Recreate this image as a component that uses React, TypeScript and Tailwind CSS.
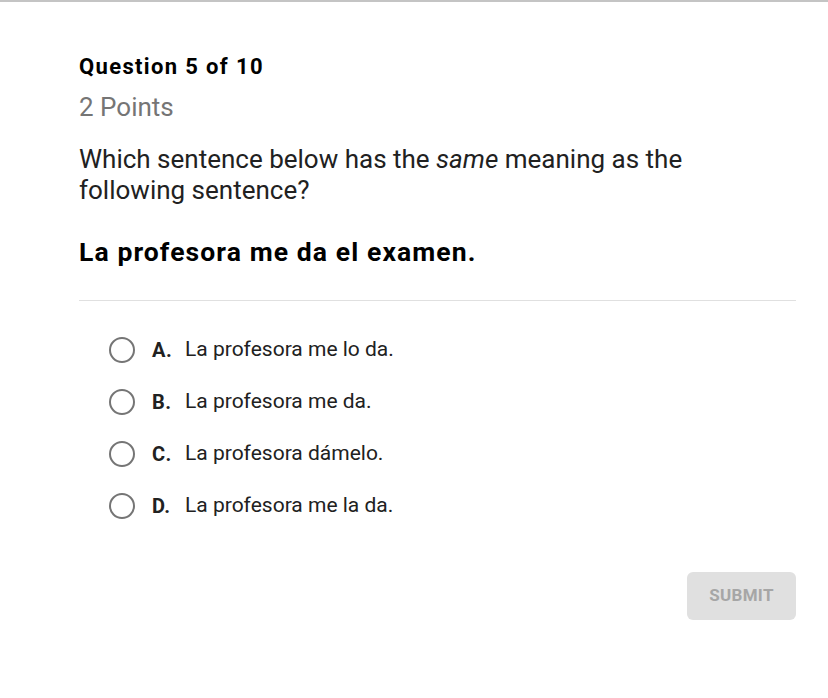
import React from 'react';

const options = [
  { letter: 'A.', text: 'La profesora me lo da.' },
  { letter: 'B.', text: 'La profesora me da.' },
  { letter: 'C.', text: 'La profesora dámelo.' },
  { letter: 'D.', text: 'La profesora me la da.' },
];

export default function App() {
  return (
    <div className="w-[828px] h-[698px] bg-white border-t-2 border-[#c4c4c4] overflow-hidden" style={{ fontFamily: 'Roboto, "Liberation Sans", sans-serif' }}>
      <div className="pl-[79px] pr-[32px] pt-[51px]">
        <h1 className="text-[22px] leading-[28px] font-bold text-black tracking-[1.35px]">Question 5 of 10</h1>
        <p className="mt-[11px] text-[26px] leading-[30px] text-[#757575]">2 Points</p>
        <p className="mt-[22px] text-[26px] leading-[31px] text-[#212121] w-[640px]">
          Which sentence below has the <em>same</em> meaning as the following sentence?
        </p>
        <p className="mt-[30px] text-[26.5px] leading-[31px] font-bold text-black tracking-[1.1px]">La profesora me da el examen.</p>
        <div className="mt-[33px] h-px bg-[#e0e0e0]" />
        <ul className="mt-[36px] pl-[30px] flex flex-col gap-[26px]">
          {options.map((o) => (
            <li key={o.letter} className="flex items-center h-[26px]">
              <span className="w-[26px] h-[26px] rounded-full border-2 border-[#757575] shrink-0" />
              <span className="ml-[17px] text-[20px] font-bold text-[#212121] tracking-[0.5px] w-[33px]">{o.letter}</span>
              <span className="text-[21px] text-[#212121]">{o.text}</span>
            </li>
          ))}
        </ul>
        <div className="mt-[53px] flex justify-end">
          <button className="w-[109px] h-[48px] rounded-[6px] bg-[#e0e0e0] text-[#a6a6a6] text-[17px] font-bold tracking-[0.3px]">
            SUBMIT
          </button>
        </div>
      </div>
    </div>
  );
}
